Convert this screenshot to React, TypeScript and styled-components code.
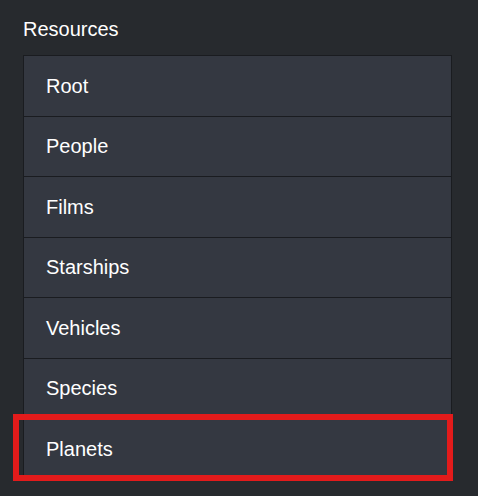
import styled, { createGlobalStyle } from 'styled-components';

const resources = ['Root', 'People', 'Films', 'Starships', 'Vehicles', 'Species', 'Planets'];

const App = () => {
  return (
    <>
      <GlobalStyle />
      <Page>
        <Title>Resources</Title>
        <List>
          {resources.map((name) => (
            <Item key={name}>
              {name}
              {name === 'Planets' && <Highlight />}
            </Item>
          ))}
        </List>
      </Page>
    </>
  );
}

const GlobalStyle = createGlobalStyle`
  html, body {
    margin: 0;
    padding: 0;
    background: #272a2e;
  }
`

const Page = styled.div`
  width: 478px;
  height: 496px;
  box-sizing: border-box;
  padding: 18px 26px 0 23px;
  background: #272a2e;
  font-family: "Liberation Sans", Arial, sans-serif;
  color: #ffffff;
  overflow: hidden;
`

const Title = styled.h2`
  margin: 0 0 14px 0;
  font-size: 20px;
  font-weight: normal;
  line-height: 23px;
`

const List = styled.ul`
  margin: 0;
  padding: 0;
  list-style: none;
  border: 1px solid #1a1c20;
  border-top: none;
`

const Item = styled.li`
  position: relative;
  box-sizing: border-box;
  height: 60.5px;
  display: flex;
  align-items: center;
  padding: 1px 22px 0;
  border-top: 1px solid #1a1c20;
  background: #343841;
  font-size: 20px;
`

const Highlight = styled.div`
  position: absolute;
  left: -11px;
  right: -2px;
  top: -5px;
  bottom: -2px;
  border: 6px solid #e31b1b;
  pointer-events: none;
`

export default App;
